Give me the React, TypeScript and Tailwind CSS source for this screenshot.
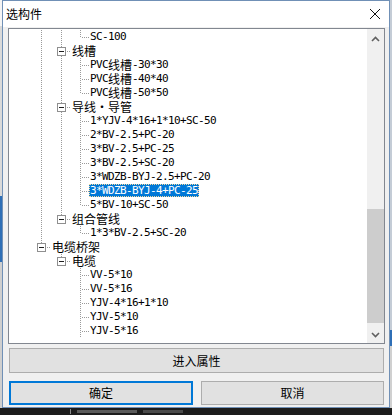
import React from 'react';

const CJK = /([\u2E80-\u9FFF\u30FB\uFF00-\uFFEF]+)/;

function Label({ text }: { text: string }) {
  const parts = text.split(CJK).filter((p) => p.length > 0);
  return (
    <>
      {parts.map((p, i) =>
        CJK.test(p) ? (
          <span key={i} className="font-['Noto_Sans_CJK_SC',sans-serif] text-[12px] leading-[13px]">
            {p}
          </span>
        ) : (
          <span key={i} className="font-['DejaVu_Sans_Mono',monospace] text-[11px] leading-[13px] tracking-[-0.62px]">
            {p}
          </span>
        )
      )}
    </>
  );
}

type Row = {
  t: string;
  kind: 'leaf' | 'node';
  w: number;
  full: number[];
  own: { x: number; half: boolean };
  sel?: boolean;
};

const L1 = 32;
const L2 = 52;
const L3 = 71;

const leaf = (t: string, full: number[], half = false, sel = false): Row => ({
  t,
  kind: 'leaf',
  w: 80,
  full,
  own: { x: L3, half },
  sel,
});
const node2 = (t: string, full: number[], half = false): Row => ({
  t,
  kind: 'node',
  w: 62,
  full,
  own: { x: L2, half },
});
const node1 = (t: string, full: number[], half = false): Row => ({
  t,
  kind: 'node',
  w: 42,
  full,
  own: { x: L1, half },
});

const rows: Row[] = [
  leaf('SC-100', [L1, L2], true),
  node2('线槽', [L1]),
  leaf('PVC线槽-30*30', [L1, L2]),
  leaf('PVC线槽-40*40', [L1, L2]),
  leaf('PVC线槽-50*50', [L1, L2], true),
  node2('导线・导管', [L1]),
  leaf('1*YJV-4*16+1*10+SC-50', [L1, L2]),
  leaf('2*BV-2.5+PC-20', [L1, L2]),
  leaf('3*BV-2.5+PC-25', [L1, L2]),
  leaf('3*BV-2.5+SC-20', [L1, L2]),
  leaf('3*WDZB-BYJ-2.5+PC-20', [L1, L2]),
  leaf('3*WDZB-BYJ-4+PC-25', [L1, L2], false, true),
  leaf('5*BV-10+SC-50', [L1, L2], true),
  node2('组合管线', [L1], true),
  leaf('1*3*BV-2.5+SC-20', [L1], true),
  node1('电缆桥架', [], true),
  node2('电缆', [], true),
  leaf('VV-5*10', []),
  leaf('VV-5*16', []),
  leaf('YJV-4*16+1*10', []),
  leaf('YJV-5*10', []),
  leaf('YJV-5*16', []),
];

const DOT = '#9a9a9a';

function Guides({ r }: { r: Row }) {
  const els: React.ReactNode[] = [];
  r.full.forEach((x, i) => {
    els.push(
      <line key={'f' + i} x1={x + 0.5} y1={0} x2={x + 0.5} y2={14} stroke={DOT} strokeDasharray="1 1" />
    );
  });
  const x = r.own.x;
  if (r.kind === 'leaf') {
    els.push(
      <line key="ov" x1={x + 0.5} y1={0} x2={x + 0.5} y2={r.own.half ? 8 : 14} stroke={DOT} strokeDasharray="1 1" />
    );
    els.push(<line key="oh" x1={x + 2} y1={7.5} x2={r.w} y2={7.5} stroke={DOT} strokeDasharray="1 1" />);
  } else {
    els.push(<line key="ov1" x1={x + 0.5} y1={0} x2={x + 0.5} y2={3} stroke={DOT} strokeDasharray="1 1" />);
    if (!r.own.half) {
      els.push(<line key="ov2" x1={x + 0.5} y1={12} x2={x + 0.5} y2={14} stroke={DOT} strokeDasharray="1 1" />);
    }
    els.push(
      <rect key="box" x={x - 3.5} y={3.5} width={8} height={8} fill="#ffffff" stroke="#8f8f8f" strokeWidth={1} />
    );
    els.push(<line key="minus" x1={x - 2} y1={7.5} x2={x + 3} y2={7.5} stroke="#1f1f1f" strokeWidth={1} />);
    els.push(<line key="oh" x1={x + 6} y1={7.5} x2={r.w} y2={7.5} stroke={DOT} strokeDasharray="1 1" />);
  }
  return (
    <svg width={r.w} height={14} className="shrink-0 block" shapeRendering="crispEdges">
      {els}
    </svg>
  );
}

function TreeRow({ r }: { r: Row }) {
  return (
    <div className="flex h-[14px] items-start">
      <Guides r={r} />
      <span
        className={
          r.sel
            ? 'flex h-[13px] items-center whitespace-nowrap px-[1px] leading-[13px] bg-[#0078d7] text-white outline outline-1 outline-dotted outline-[#f3d9a0] -outline-offset-1'
            : 'flex h-[13px] items-center whitespace-nowrap px-[1px] leading-[13px] text-black'
        }
      >
        <Label text={r.t} />
      </span>
    </div>
  );
}

function Chevron({ up }: { up: boolean }) {
  return (
    <svg width={9} height={6} viewBox="0 0 9 6">
      <path
        d={up ? 'M1 5 L4.5 1.5 L8 5' : 'M1 1 L4.5 4.5 L8 1'}
        fill="none"
        stroke="#606060"
        strokeWidth={1.6}
      />
    </svg>
  );
}

export default function App() {
  return (
    <div className="w-[392px] h-[415px] overflow-hidden flex flex-col bg-[#d6d6d6] font-['Noto_Sans_CJK_SC',sans-serif]">
      <div className="flex h-[408px]">
        <div className="w-[2px] flex flex-col">
          <div className="h-[26px] bg-[#f4f4f4]" />
          <div className="h-[170px] bg-[#d9d9d9]" />
          <div className="h-[66px] bg-[#2f6fb6]" />
          <div className="flex-1 bg-[#cfcfcf]" />
        </div>

        <div className="w-[388px] h-[408px] border border-[#7090b6] bg-[#f0f0f0] flex flex-col">
          <div className="h-[26px] bg-white flex items-center justify-between pl-[3px] pr-[8px]">
            <span className="text-[12px] text-black leading-none">选构件</span>
            <svg width={12} height={12} viewBox="0 0 12 12">
              <path d="M1 1 L11 11 M11 1 L1 11" stroke="#111" strokeWidth={1} />
            </svg>
          </div>

          <div className="mt-[1px] ml-[5px] w-[377px] h-[316px] border border-[#828790] bg-white flex">
            <div className="flex-1 overflow-hidden pt-[1px]">
              {rows.map((r, i) => (
                <TreeRow key={i} r={r} />
              ))}
            </div>
            <div className="w-[17px] bg-[#f0f0f0] flex flex-col">
              <div className="h-[17px] flex items-center justify-center pt-[2px]">
                <Chevron up />
              </div>
              <div className="h-[163px]" />
              <div className="h-[114px] bg-[#cdcdcd]" />
              <div className="flex-1" />
              <div className="h-[17px] flex items-center justify-center">
                <Chevron up={false} />
              </div>
            </div>
          </div>

          <div className="mt-[4px] ml-[6px] w-[375px] h-[25px] border border-[#adadad] bg-[#e1e1e1] flex items-center justify-center text-[12px] text-black">
            进入属性
          </div>

          <div className="mt-[8px] ml-[6px] flex gap-[8px]">
            <div className="w-[184px] h-[24px] border-2 border-[#0078d7] bg-[#e1e1e1] flex items-center justify-center text-[12px] text-black">
              确定
            </div>
            <div className="w-[183px] h-[24px] border border-[#adadad] bg-[#e1e1e1] flex items-center justify-center text-[12px] text-black">
              取消
            </div>
          </div>
        </div>

        <div className="w-[2px] flex flex-col">
          <div className="h-[330px] bg-[#c4ccd6]" />
          <div className="h-[16px] bg-[#2f6fb6]" />
          <div className="flex-1 bg-[#d0d0d0]" />
        </div>
      </div>
      <div className="flex-1 bg-[#1c1c1c] flex items-center pl-[70px] gap-[6px]">
        <div className="w-[1px] h-[5px] bg-[#8a8a8a]" />
        <div className="w-[60px] h-[3px] bg-[#5a5a5a]" />
        <div className="w-[40px] h-[3px] bg-[#4a4a4a]" />
      </div>
    </div>
  );
}
